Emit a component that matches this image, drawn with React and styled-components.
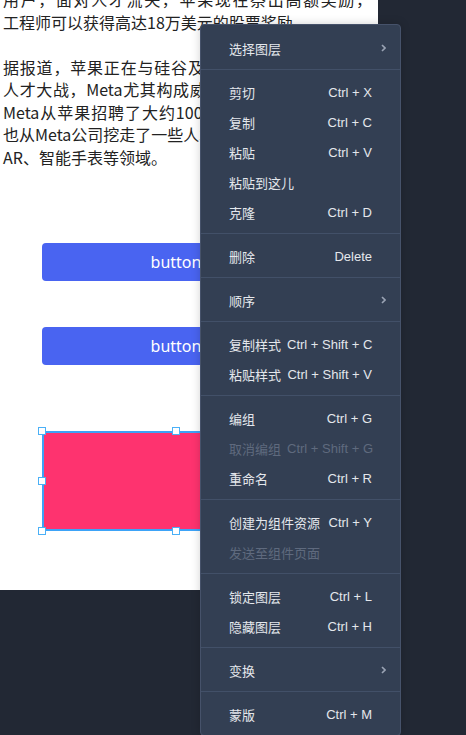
import React from "react";
import styled, { createGlobalStyle } from "styled-components";

const GlobalStyle = createGlobalStyle`
  html, body {
    margin: 0;
    padding: 0;
    background: #222834;
  }
`;

const Page = styled.div`
  position: relative;
  width: 466px;
  height: 735px;
  overflow: hidden;
  background: #222834;
`;

const Canvas = styled.div`
  width: 378px;
  height: 590px;
  background: #fff;
  overflow: hidden;
`;

const Article = styled.div`
  width: 369px;
  margin-top: -12px;
  padding-left: 3px;
  font-family: "Noto Sans CJK SC", "Noto Sans", sans-serif;
  font-size: 16px;
  line-height: 22.5px;
  color: #222;
`;

const Paragraph = styled.p`
  margin: 0 0 22.5px;
  &:last-child {
    margin-bottom: 0;
  }
`;

const Line = styled.span`
  display: block;
  white-space: nowrap;
  text-align: justify;
  text-align-last: ${(p) => (p.$full ? "justify" : "left")};
`;

const Button = styled.div`
  display: flex;
  align-items: center;
  justify-content: center;
  width: 268px;
  height: 38px;
  margin: ${(p) => p.$top}px 0 0 42px;
  background: #4964f1;
  border-radius: 4px;
  color: #fff;
  font-family: "Noto Sans", sans-serif;
  font-size: 16px;
`;

const Shape = styled.div`
  position: relative;
  width: 268px;
  height: 100px;
  margin: 66px 0 0 42px;
  background: #fe336f;
  box-shadow: inset 0 0 0 2px #3da3f7;
`;

const Handle = styled.span`
  position: absolute;
  box-sizing: border-box;
  width: 8px;
  height: 8px;
  background: #fff;
  border: 1.5px solid #4ab0f7;
  left: calc(${(p) => p.$x}% - 4px);
  top: calc(${(p) => p.$y}% - 4px);
`;

const Menu = styled.div`
  position: absolute;
  left: 200px;
  top: 24px;
  width: 201px;
  box-sizing: border-box;
  padding-top: 1px;
  background: #333f53;
  border: 1px solid #46526a;
  border-radius: 4px;
  box-shadow: 0 0 10px rgba(0, 0, 0, 0.18);
  font-family: "Liberation Sans", "Noto Sans CJK SC", sans-serif;
  font-size: 13px;
`;

const Group = styled.div`
  padding: 7px 0 6px;
  & + & {
    border-top: 1px solid #425068;
  }
`;

const Item = styled.div`
  display: flex;
  align-items: center;
  justify-content: space-between;
  gap: 6px;
  height: 30px;
  padding: 0 28px;
  color: ${(p) => (p.$disabled ? "#5f6a7e" : "#e4e7ec")};
  white-space: nowrap;
`;

const Arrow = styled.svg`
  margin-right: -14px;
  width: 5px;
  height: 8px;
`;

const Chevron = () => (
  <Arrow viewBox="0 0 5 8">
    <path d="M1 1 L4 4 L1 7" fill="none" stroke="#9aa3b4" strokeWidth="1.6" />
  </Arrow>
);

const groups = [
  [{ label: "选择图层", sub: true }],
  [
    { label: "剪切", key: "Ctrl + X" },
    { label: "复制", key: "Ctrl + C" },
    { label: "粘贴", key: "Ctrl + V" },
    { label: "粘贴到这儿" },
    { label: "克隆", key: "Ctrl + D" },
  ],
  [{ label: "删除", key: "Delete" }],
  [{ label: "顺序", sub: true }],
  [
    { label: "复制样式", key: "Ctrl + Shift + C" },
    { label: "粘贴样式", key: "Ctrl + Shift + V" },
  ],
  [
    { label: "编组", key: "Ctrl + G" },
    { label: "取消编组", key: "Ctrl + Shift + G", disabled: true },
    { label: "重命名", key: "Ctrl + R" },
  ],
  [
    { label: "创建为组件资源", key: "Ctrl + Y" },
    { label: "发送至组件页面", disabled: true },
  ],
  [
    { label: "锁定图层", key: "Ctrl + L" },
    { label: "隐藏图层", key: "Ctrl + H" },
  ],
  [{ label: "变换", sub: true }],
  [{ label: "蒙版", key: "Ctrl + M" }],
];

const handles = [
  [0, 0], [50, 0], [100, 0],
  [0, 50], [100, 50],
  [0, 100], [50, 100], [100, 100],
];

export default function App() {
  return (
    <Page>
      <GlobalStyle />
      <Canvas>
        <Article>
          <Paragraph>
            <Line $full>用户，面对人才流失，苹果现在祭出高额奖励，</Line>
            <Line>工程师可以获得高达18万美元的股票奖励。</Line>
          </Paragraph>
          <Paragraph>
            <Line $full>据报道，苹果正在与硅谷及其他科技公司展开一场</Line>
            <Line $full>人才大战，Meta尤其构成威胁。过去几年时间里，</Line>
            <Line $full>Meta从苹果招聘了大约100名工程师，而苹果公司</Line>
            <Line $full>也从Meta公司挖走了一些人才，主要集中在芯片、VR、</Line>
            <Line>AR、智能手表等领域。</Line>
          </Paragraph>
        </Article>
        <Button $top={75}>button</Button>
        <Button $top={46}>button</Button>
        <Shape>
          {handles.map(([x, y]) => (
            <Handle key={`${x}-${y}`} $x={x} $y={y} />
          ))}
        </Shape>
      </Canvas>
      <Menu>
        {groups.map((items, i) => (
          <Group key={i}>
            {items.map((it) => (
              <Item key={it.label} $disabled={it.disabled}>
                <span>{it.label}</span>
                {it.key && <span>{it.key}</span>}
                {it.sub && <Chevron />}
              </Item>
            ))}
          </Group>
        ))}
      </Menu>
    </Page>
  );
}
